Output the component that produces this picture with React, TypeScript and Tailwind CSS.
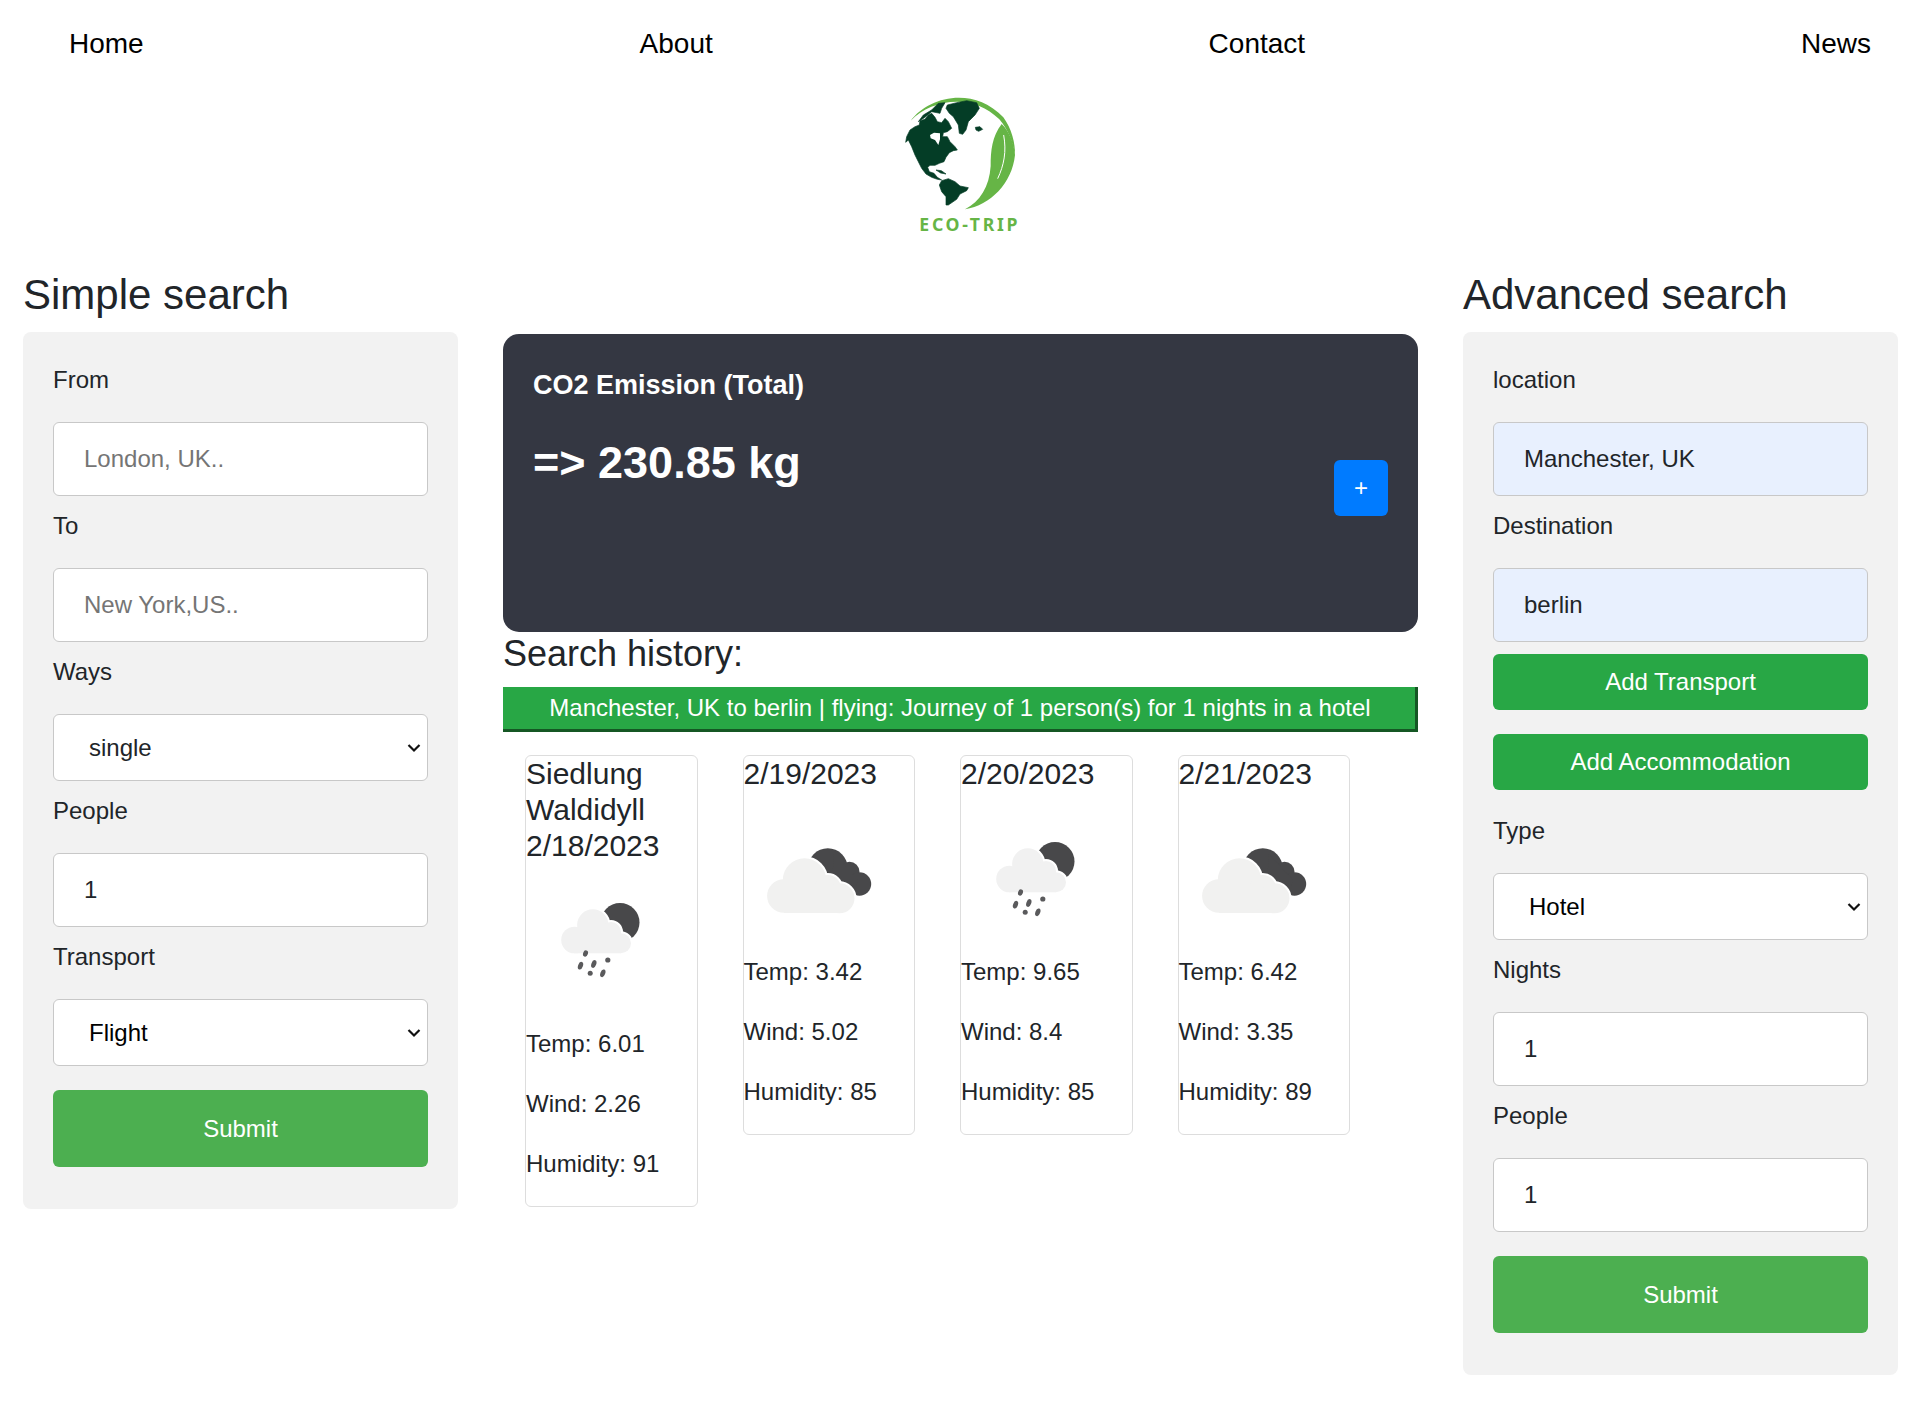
import React from 'react';

const Label = ({ children }: { children: React.ReactNode }) => (
  <label className="block h-9 mb-3 text-2xl leading-9 text-[#212529]">{children}</label>
);

const TextField = ({ value, placeholder, filled }: { value?: string; placeholder?: string; filled?: boolean }) => (
  <input
    readOnly
    value={value ?? ''}
    placeholder={placeholder}
    className={`block w-full h-[74px] my-3 px-[30px] text-2xl text-[#212529] placeholder:text-[#757575] border border-[#c8c8c8] rounded-md ${filled ? 'bg-[#e8f0fe]' : 'bg-white'}`}
  />
);

const SelectField = ({ value, color }: { value: string; color: string }) => (
  <div className="relative my-3">
    <select
      defaultValue={value}
      className={`block w-full h-[67px] pl-[35px] pr-10 text-2xl appearance-none border border-[#c8c8c8] rounded-md bg-white ${color}`}
    >
      <option>{value}</option>
    </select>
    <svg className="absolute right-[7px] top-[29px] w-[14px] h-[10px]" viewBox="0 0 14 10" fill="none">
      <path d="M1.5 2 L7 7.5 L12.5 2" stroke="#111" strokeWidth="2.2" />
    </svg>
  </div>
);

const SubmitButton = () => (
  <button className="block w-full h-[77px] my-3 bg-[#4caf50] text-white text-2xl rounded-md">Submit</button>
);

const GreenButton = ({ children, className }: { children: React.ReactNode; className: string }) => (
  <button className={`block w-full h-14 bg-[#28a745] text-white text-2xl rounded-md ${className}`}>{children}</button>
);

const Logo = () => (
  <svg className="w-[200px] h-[170px]" viewBox="0 0 600 510">
    {/* ring */}
    <path d="M152 122 C205 50 340 16 430 112 C455 146 466 190 465 225 C458 185 445 150 418 118 C340 38 215 56 152 122 Z" fill="#66b546" />
    {/* leaf */}
    <path d="M425 132 C396 170 392 212 392 258 C388 320 360 365 315 388 C392 375 456 310 465 225 C462 190 447 152 425 132 Z" fill="#66b546" />
    <path d="M431 165 C440 215 432 255 413 296" fill="none" stroke="#fff" strokeWidth="3" />
    <g fill="#043d26" stroke="#043d26" strokeWidth="2" strokeLinejoin="round">
      {/* north america */}
      <path d="M137 187 L140 170 L150 150 L165 140 L178 135 L180 122 L195 118 L205 105 L215 100 L225 112 L232 125 L245 128 L255 115 L265 125 L275 145 L262 155 L250 158 L248 170 L262 170 L270 185 L285 200 L292 210 L280 212 L268 218 L258 232 L252 245 L238 250 L225 256 L210 256 L203 262 L208 275 L222 280 L232 292 L245 300 L232 298 L215 292 L198 282 L185 265 L175 245 L165 225 L155 200 L145 180 Z" />
      {/* arctic islands */}
      <path d="M175 125 L190 105 L215 90 L235 70 L255 68 L245 85 L240 100 L215 95 L195 112 Z" />
      {/* cuba */}
      <path d="M228 270 L244 272 L258 282 L242 279 Z" />
      {/* greenland */}
      <path d="M258 85 L262 75 L290 68 L320 62 L350 68 L358 85 L345 105 L325 125 L318 150 L308 163 L298 160 L295 135 L280 110 L268 100 Z" />
      {/* iceland */}
      <path d="M346 142 L360 140 L368 148 L356 154 L348 150 Z" />
      {/* south america */}
      <path d="M238 315 L245 302 L265 296 L285 305 L300 318 L325 323 L320 332 L300 342 L290 358 L265 375 L258 375 L258 350 L245 335 Z" />
    </g>
    {/* hudson bay */}
    <path d="M210 165 L222 158 L240 160 L240 178 L235 195 L225 180 L212 175 Z" fill="#fff" />
    <text x="178" y="452" fontFamily="'Noto Sans', sans-serif" fontWeight="700" fontSize="53" letterSpacing="8" fill="#66b546">
      ECO-TRIP
    </text>
  </svg>
);

const CloudIcon = () => (
  <svg className="block w-[150px] h-[162px] mx-auto" viewBox="0 0 150 162">
    <g fill="#48484a">
      <circle cx="73.8" cy="76.3" r="20" />
      <circle cx="95.5" cy="79.7" r="10" />
      <circle cx="105.5" cy="92" r="11.7" />
      <path d="M80 62 L104 88 L100 103 L78 90 Z" />
    </g>
    <g fill="#fff" stroke="#fff" strokeWidth="4">
      <circle cx="50.5" cy="88" r="21.7" />
      <circle cx="73.8" cy="96.3" r="13.3" />
      <circle cx="85.5" cy="106.3" r="15" />
    </g>
    <g fill="#f1f1f0">
      <circle cx="29.8" cy="104" r="16.7" />
      <circle cx="50.5" cy="88" r="21.7" />
      <circle cx="73.8" cy="96.3" r="13.3" />
      <circle cx="85.5" cy="106.3" r="15" />
      <rect x="30" y="96" width="56" height="25" />
    </g>
  </svg>
);

const RainIcon = ({ dy }: { dy: number }) => (
  <svg className="block w-[150px] h-[162px] mx-auto" viewBox="0 0 150 162">
    <g transform={`translate(0 ${dy})`}>
      <circle cx="84" cy="58.5" r="19.5" fill="#48484a" />
      <g fill="#fff" stroke="#fff" strokeWidth="4">
        <circle cx="56.8" cy="61" r="15.7" />
        <circle cx="75" cy="68" r="10" />
        <circle cx="85" cy="79.3" r="10" />
      </g>
      <g fill="#f1f1f1">
        <circle cx="38.5" cy="76" r="13.3" />
        <circle cx="56.8" cy="61" r="15.7" />
        <circle cx="75" cy="68" r="10" />
        <circle cx="85" cy="79.3" r="10" />
        <rect x="38" y="68" width="47" height="21.3" />
      </g>
      <g fill="#5a5a5c">
        <ellipse cx="49.5" cy="89.5" rx="2.4" ry="3.2" transform="rotate(20 49.5 89.5)" />
        <ellipse cx="44.5" cy="101.7" rx="2.4" ry="4" transform="rotate(20 44.5 101.7)" />
        <ellipse cx="57.8" cy="100" rx="2.4" ry="4" transform="rotate(20 57.8 100)" />
        <ellipse cx="71.8" cy="96" rx="2.6" ry="2.6" />
        <ellipse cx="54.2" cy="109.3" rx="2.5" ry="2.5" />
        <ellipse cx="66.8" cy="109.3" rx="2.4" ry="4" transform="rotate(20 66.8 109.3)" />
      </g>
    </g>
  </svg>
);

const days = [
  { title: ['Siedlung', 'Waldidyll', '2/18/2023'], rain: true, iconDy: 0, temp: '6.01', wind: '2.26', humidity: '91' },
  { title: ['2/19/2023'], rain: false, iconDy: 0, temp: '3.42', wind: '5.02', humidity: '85' },
  { title: ['2/20/2023'], rain: true, iconDy: 11, temp: '9.65', wind: '8.4', humidity: '85' },
  { title: ['2/21/2023'], rain: false, iconDy: 0, temp: '6.42', wind: '3.35', humidity: '89' },
];

export default function App() {
  return (
    <div className="font-['Liberation_Sans',Arial,sans-serif] text-[#212529] bg-white">
      <nav className="flex justify-between items-center h-[88px] pl-[69px] pr-[49px] text-[28px] text-black">
        <a>Home</a>
        <a>About</a>
        <a>Contact</a>
        <a>News</a>
      </nav>

      <div className="flex justify-center h-[182px] -mt-[8px]">
        <Logo />
      </div>

      <main className="flex items-start justify-between pl-[23px] pr-[22px] pt-2">
        <section className="w-[435px]">
          <h2 className="text-[42px] leading-[50px] mb-3">Simple search</h2>
          <form className="flex flex-col bg-[#f2f2f2] rounded-lg px-[30px] pt-[30px] pb-[30px]">
            <Label>From</Label>
            <TextField placeholder="London, UK.." />
            <Label>To</Label>
            <TextField placeholder="New York,US.." />
            <Label>Ways</Label>
            <SelectField value="single" color="text-[#212529]" />
            <Label>People</Label>
            <TextField value="1" />
            <Label>Transport</Label>
            <SelectField value="Flight" color="text-black" />
            <SubmitButton />
          </form>
        </section>

        <section className="w-[915px] pt-16">
          <div className="flex justify-between h-[298px] p-[30px] bg-[#343742] text-white rounded-2xl">
            <div>
              <h5 className="text-[27px] leading-[32px] font-bold mb-[35px] mt-[5px]">CO2 Emission (Total)</h5>
              <p className="text-[45px] leading-[54px] font-bold">=&gt; 230.85 kg</p>
            </div>
            <button className="w-[54px] h-14 mt-[96px] bg-[#007bff] text-white text-2xl rounded-md">+</button>
          </div>

          <h3 className="text-4xl leading-[43px] mb-3">Search history:</h3>
          <div className="h-[45px] pl-[2px] bg-[#28a745] border-r-[3px] border-b-[3px] border-[#155724] text-white text-2xl leading-[42px] text-center">
            Manchester, UK to berlin | flying: Journey of 1 person(s) for 1 nights in a hotel
          </div>

          <div className="flex items-start gap-[45px] pl-[22px] mt-[23px]">
            {days.map((d) => (
              <article key={d.temp} className="w-[172.5px] border border-[#ddd] rounded-md">
                <h4 className="text-[30px] leading-9">
                  {d.title.map((t) => (
                    <div key={t}>{t}</div>
                  ))}
                </h4>
                {d.rain ? <RainIcon dy={d.iconDy} /> : <CloudIcon />}
                <p className="text-2xl leading-9 mb-6">Temp: {d.temp}</p>
                <p className="text-2xl leading-9 mb-6">Wind: {d.wind}</p>
                <p className="text-2xl leading-9 mb-6">Humidity: {d.humidity}</p>
              </article>
            ))}
          </div>
        </section>

        <section className="w-[435px]">
          <h2 className="text-[42px] leading-[50px] mb-3">Advanced search</h2>
          <form className="flex flex-col bg-[#f2f2f2] rounded-lg px-[30px] pt-[30px] pb-[30px]">
            <Label>location</Label>
            <TextField value="Manchester, UK" filled />
            <Label>Destination</Label>
            <TextField value="berlin" filled />
            <GreenButton className="mb-6">Add Transport</GreenButton>
            <GreenButton className="mb-[23px]">Add Accommodation</GreenButton>
            <Label>Type</Label>
            <SelectField value="Hotel" color="text-black" />
            <Label>Nights</Label>
            <TextField value="1" />
            <Label>People</Label>
            <TextField value="1" />
            <SubmitButton />
          </form>
        </section>
      </main>
      <div className="h-[25px]" />
    </div>
  );
}
